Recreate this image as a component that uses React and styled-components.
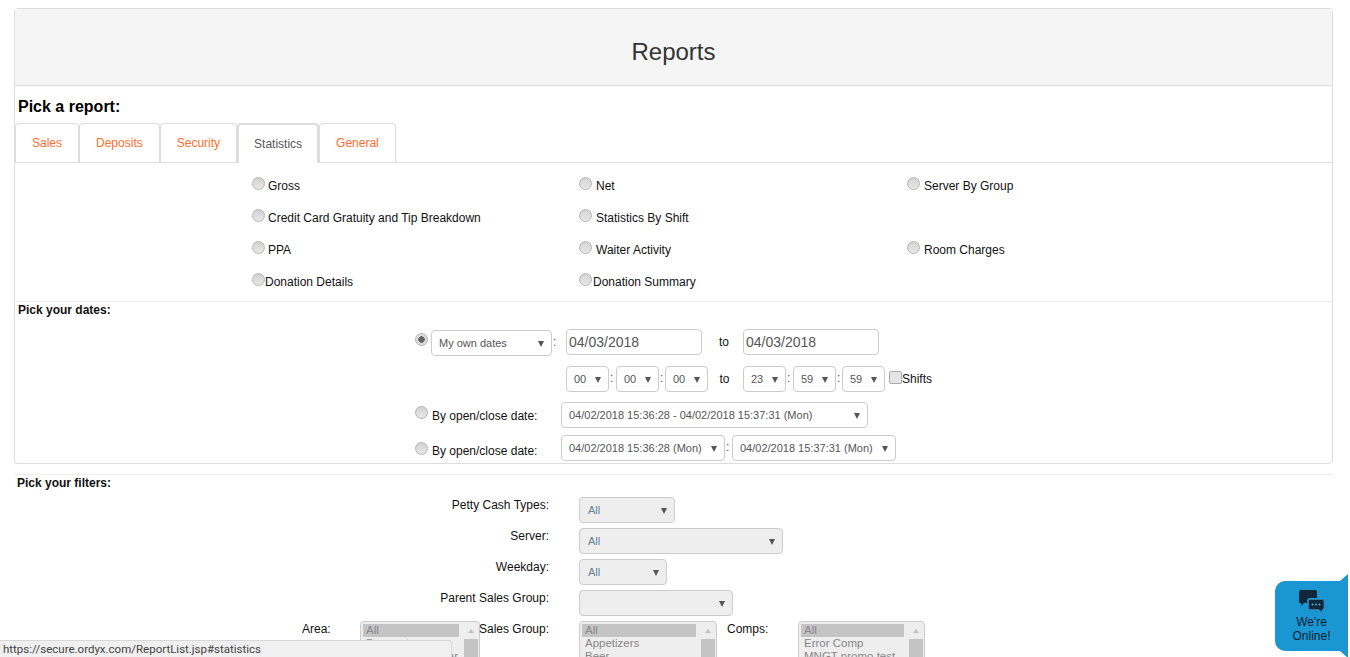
import styled, { createGlobalStyle } from "styled-components";

const GlobalStyle = createGlobalStyle`
html, body {
    margin: 0;
    height: 657px;
    overflow: hidden;
    background: #fff;
    font-family: "Liberation Sans", Arial, sans-serif;
    font-size: 12px;
    color: #111;
}
* { box-sizing: border-box; }
`;

const tabs = ["Sales", "Deposits", "Security", "Statistics", "General"];

const reports = [
    ["Gross", "Net", "Server By Group"],
    ["Credit Card Gratuity and Tip Breakdown", "Statistics By Shift", ""],
    ["PPA", "Waiter Activity", "Room Charges"],
    ["Donation Details", "Donation Summary", ""],
];

function Select({ width, muted, children }) {
    return (
        <SelectBox $width={width} $muted={muted}>
            <span>{children}</span>
            <Caret />
        </SelectBox>
    );
}

function ListBox({ width, items }) {
    return (
        <List $width={width}>
            <ListItems>
                {items.map((item, i) => (
                    <ListItem key={item} $selected={i === 0}>{item}</ListItem>
                ))}
            </ListItems>
            <ScrollTrack>
                <ScrollArrow />
                <ScrollThumb />
            </ScrollTrack>
        </List>
    );
}

export default function App() {
    return (
        <Page>
            <GlobalStyle />
            <Panel>
                <PanelHeading>Reports</PanelHeading>
                <PickTitle>Pick a report:</PickTitle>
                <TabBar>
                    {tabs.map((tab) => (
                        <Tab key={tab} $active={tab === "Statistics"}>{tab}</Tab>
                    ))}
                </TabBar>
                <ReportGrid>
                    {reports.map((row, r) =>
                        row.map((label, c) => (
                            <ReportCell key={r + "-" + c}>
                                {label && <Radio />}
                                {label && (
                                    <ReportLabel $gap={r === 3 ? c : c === 0 ? 3 : 4}>{label}</ReportLabel>
                                )}
                            </ReportCell>
                        ))
                    )}
                </ReportGrid>
                <SectionTitle>Pick your dates:</SectionTitle>
                <DateForm>
                    <DateRow>
                        <Radio $checked $top={4} />
                        <OwnDates>
                            <Select width={121}>My own dates</Select>
                            <Colon>:</Colon>
                        </OwnDates>
                        <DateInput>04/03/2018</DateInput>
                        <ToLabel $wide>to</ToLabel>
                        <DateInput>04/03/2018</DateInput>
                    </DateRow>
                    <TimeRow>
                        <Select width={43}>00</Select>
                        <Colon>:</Colon>
                        <Select width={43}>00</Select>
                        <Colon $narrow>:</Colon>
                        <Select width={43}>00</Select>
                        <ToLabel>to</ToLabel>
                        <Select width={43}>23</Select>
                        <Colon>:</Colon>
                        <Select width={43}>59</Select>
                        <Colon $narrow>:</Colon>
                        <Select width={43}>59</Select>
                        <Checkbox />
                        <span>Shifts</span>
                    </TimeRow>
                    <RangeRow>
                        <Radio $top={4} />
                        <RangeLabel $top={7}>By open/close date:</RangeLabel>
                        <Select width={307}>04/02/2018 15:36:28 - 04/02/2018 15:37:31 (Mon)</Select>
                    </RangeRow>
                    <RangeRow>
                        <Radio $top={7} />
                        <RangeLabel $top={9}>By open/close date:</RangeLabel>
                        <Select width={164}>04/02/2018 15:36:28 (Mon)</Select>
                        <Colon>:</Colon>
                        <Select width={164}>04/02/2018 15:37:31 (Mon)</Select>
                    </RangeRow>
                </DateForm>
            </Panel>
            <FilterDivider />
            <FilterTitle>Pick your filters:</FilterTitle>
            <FilterForm>
                <FilterRow>
                    <FilterLabel>Petty Cash Types:</FilterLabel>
                    <Select width={96} muted>All</Select>
                </FilterRow>
                <FilterRow>
                    <FilterLabel>Server:</FilterLabel>
                    <Select width={204} muted>All</Select>
                </FilterRow>
                <FilterRow>
                    <FilterLabel>Weekday:</FilterLabel>
                    <Select width={88} muted>All</Select>
                </FilterRow>
                <FilterRow>
                    <FilterLabel>Parent Sales Group:</FilterLabel>
                    <Select width={154} muted />
                </FilterRow>
                <ListRow>
                    <AreaLabel>Area:</AreaLabel>
                    <ListBox width={120} items={["All", "Banquet room", "Outdoor Patio Bar"]} />
                    <SalesLabel>Sales Group:</SalesLabel>
                    <ListBox width={138} items={["All", "Appetizers", "Beer"]} />
                    <CompsLabel>Comps:</CompsLabel>
                    <ListBox width={127} items={["All", "Error Comp", "MNGT promo test"]} />
                </ListRow>
            </FilterForm>
            <StatusBar>https://secure.ordyx.com/ReportList.jsp#statistics</StatusBar>
            <ChatWidget>
                <ChatNotch />
                <ChatIcon viewBox="0 0 26 23">
                    <path d="M1.500 0h15A1.500 1.500 0 0 1 18 1.500V8H10.500A2.500 2.500 0 0 0 8 10.500V13H5l-3 3v-3H1.500A1.500 1.500 0 0 1 0 11.500v-10A1.500 1.500 0 0 1 1.500 0Z" />
                    <FrontBubble d="M11 9.500h12.500a1.500 1.500 0 0 1 1.500 1.500v7a1.500 1.500 0 0 1-1.500 1.500H23v3l-3-3h-9A1.500 1.500 0 0 1 9.500 18v-7A1.500 1.500 0 0 1 11 9.500Z" />
                    <Dot cx="13.500" cy="14.500" r="1" />
                    <Dot cx="17" cy="14.500" r="1" />
                    <Dot cx="20.500" cy="14.500" r="1" />
                </ChatIcon>
                <ChatText>We're<br />Online!</ChatText>
            </ChatWidget>
        </Page>
    );
}

const Page = styled.div`
    padding: 8px 17px 0 14px;
    height: 657px;
    overflow: hidden;
`;

const Panel = styled.div`
    height: 456px;
    border: 1px solid #ddd;
    border-radius: 4px;
    overflow: hidden;
`;

const PanelHeading = styled.div`
    height: 77px;
    padding-top: 28px;
    background: #f5f5f5;
    border-bottom: 1px solid #ddd;
    text-align: center;
    font-size: 24px;
    line-height: 30px;
    color: #333;
`;

const PickTitle = styled.div`
    height: 37px;
    padding: 12px 0 0 3px;
    font-size: 16px;
    line-height: 18px;
    font-weight: bold;
    color: #000;
`;

const TabBar = styled.div`
    display: flex;
    height: 40px;
    border-bottom: 1px solid #ddd;
`;

const Tab = styled.div`
    height: ${(p) => (p.$active ? "40px" : "39px")};
    padding: 0 ${(p) => (p.$active ? "15px" : "16px")};
    display: flex;
    align-items: center;
    background: #fff;
    border-style: solid;
    border-color: #ddd;
    border-width: ${(p) => (p.$active ? "2px 2px 0 2px" : "1px 1px 0 1px")};
    border-radius: 4px 4px 0 0;
    color: ${(p) => (p.$active ? "#555" : "#ff6d2e")};
`;

const ReportGrid = styled.div`
    display: grid;
    grid-template-columns: 327px 328px 1fr;
    grid-auto-rows: 32px;
    height: 139px;
    padding: 7px 0 0 237px;
    border-bottom: 1px solid #eee;
`;

const ReportCell = styled.div`
    display: flex;
    align-items: flex-start;
    padding-top: 8px;
`;

const Radio = styled.span`
    flex: none;
    width: 13px;
    height: 13px;
    margin-top: ${(p) => p.$top ?? -1}px;
    border-radius: 50%;
    border: 1px solid #b4b4b4;
    background: ${(p) =>
        p.$checked
            ? "radial-gradient(circle, #666 0 3px, #ddd 3.500px)"
            : "linear-gradient(#d2d2d2, #e8e8e8)"};
`;

const ReportLabel = styled.span`
    margin-left: ${(p) => p.$gap}px;
    line-height: 14px;
    padding-top: 1px;
`;

const SectionTitle = styled.div`
    height: 21px;
    padding: 1px 0 0 3px;
    font-weight: bold;
    line-height: 14px;
    color: #111;
`;

const DateForm = styled.div`
    padding-left: 400px;
`;

const DateRow = styled.div`
    display: flex;
    align-items: flex-start;
    height: 37px;
    margin-top: 6px;
`;

const OwnDates = styled.div`
    display: flex;
    width: 135px;
    margin: 1px 0 0 3px;
`;

const TimeRow = styled.div`
    display: flex;
    align-items: flex-start;
    height: 36px;
    padding-left: 151px;
    line-height: 26px;
`;

const RangeRow = styled.div`
    display: flex;
    align-items: flex-start;
    height: 33px;
`;

const SelectBox = styled.div`
    flex: none;
    position: relative;
    display: flex;
    align-items: center;
    width: ${(p) => p.$width}px;
    height: 26px;
    padding-left: ${(p) => (p.$muted ? "8px" : "7px")};
    font-size: 11px;
    color: ${(p) => (p.$muted ? "#5f7f99" : "#555")};
    background: ${(p) => (p.$muted ? "#eee" : "#fff")};
    border: 1px solid #ccc;
    border-radius: 4px;
    white-space: nowrap;
`;

const Caret = styled.i`
    position: absolute;
    right: 7px;
    top: 10px;
    width: 0;
    height: 0;
    border-left: 3.500px solid transparent;
    border-right: 3.500px solid transparent;
    border-top: 6px solid #555;
`;

const Colon = styled.span`
    width: ${(p) => (p.$narrow ? "6px" : "7px")};
    padding-left: 1px;
    line-height: 24px;
    color: #555;
`;

const DateInput = styled.div`
    flex: none;
    width: 136px;
    height: 26px;
    padding: 0 2px;
    border: 1px solid #ccc;
    border-radius: 4px;
    font-size: 14px;
    line-height: 24px;
    color: #555;
`;

const ToLabel = styled.span`
    width: ${(p) => (p.$wide ? "41px" : "35px")};
    padding: ${(p) => (p.$wide ? "0 0 0 3px" : "0 2px 0 0")};
    text-align: center;
    line-height: 26px;
`;

const Checkbox = styled.span`
    width: 13px;
    height: 13px;
    margin: 5px 0 0 4px;
    border: 1px solid #aaa;
    border-radius: 2px;
    background: #e4e4e4;
`;

const RangeLabel = styled.span`
    width: 133px;
    padding: ${(p) => p.$top}px 0 0 4px;
    line-height: 14px;
`;

const FilterDivider = styled.div`
    height: 1px;
    margin-top: 10px;
    background: #eee;
`;

const FilterTitle = styled.div`
    height: 22px;
    padding: 1px 0 0 3px;
    font-weight: bold;
    line-height: 14px;
    color: #111;
`;

const FilterForm = styled.div`
    display: flex;
    flex-direction: column;
    gap: 5px;
`;

const FilterRow = styled.div`
    display: flex;
    align-items: flex-start;
`;

const FilterLabel = styled.span`
    width: 535px;
    margin-right: 30px;
    text-align: right;
    line-height: 14px;
    padding-top: 1px;
`;

const ListRow = styled.div`
    display: flex;
    align-items: flex-start;
`;

const AreaLabel = styled.span`
    width: 346px;
    padding-left: 288px;
    line-height: 14px;
    padding-top: 1px;
`;

const SalesLabel = styled.span`
    width: 100px;
    text-align: right;
    margin-left: -31px;
    margin-right: 30px;
    line-height: 14px;
    padding-top: 1px;
`;

const CompsLabel = styled.span`
    width: 81px;
    padding-left: 10px;
    line-height: 14px;
    padding-top: 1px;
`;

const List = styled.div`
    flex: none;
    display: flex;
    justify-content: space-between;
    width: ${(p) => p.$width}px;
    height: 70px;
    padding: 2px 1px 0 2px;
    background: #eee;
    border: 1px solid #ccc;
    border-radius: 4px;
`;

const ListItems = styled.div`
    flex: 1;
    margin-right: 5px;
    min-width: 0;
`;

const ListItem = styled.div`
    height: 13px;
    padding-left: 3px;
    font-size: 11.500px;
    line-height: 13px;
    color: #888;
    background: ${(p) => (p.$selected ? "#c4c4c4" : "transparent")};
    white-space: nowrap;
    overflow: hidden;
`;

const ScrollTrack = styled.div`
    flex: none;
    width: 14px;
    display: flex;
    flex-direction: column;
    align-items: center;
`;

const ScrollArrow = styled.i`
    width: 0;
    height: 0;
    margin: 5px 0 6px;
    border-left: 3.500px solid transparent;
    border-right: 3.500px solid transparent;
    border-bottom: 4px solid #c0c0c0;
`;

const ScrollThumb = styled.div`
    width: 14px;
    flex: 1;
    background: #c4c4c4;
`;

const StatusBar = styled.div`
    position: fixed;
    left: 0;
    bottom: 0;
    width: 452px;
    height: 17px;
    padding-left: 3px;
    background: #f0f0f0;
    border: 1px solid #d8d8d8;
    border-width: 1px 1px 0 0;
    border-top-right-radius: 3px;
    font-family: Roboto, sans-serif;
    font-size: 11.500px;
    line-height: 17px;
    color: #444;
`;

const ChatWidget = styled.div`
    position: fixed;
    left: 1275px;
    top: 581px;
    width: 73px;
    height: 70px;
    padding-top: 9px;
    background: #1a96d2;
    border-radius: 10px 0 0 10px;
    display: flex;
    flex-direction: column;
    align-items: center;
    color: #0b2233;
`;

const ChatNotch = styled.i`
    position: absolute;
    right: 0;
    top: -7px;
    width: 8px;
    height: 84px;
    background: #1a96d2;
    clip-path: polygon(0 7px, 100% 0, 100% 100%, 0 77px);
`;

const ChatIcon = styled.svg`
    width: 26px;
    height: 23px;
    fill: #10263a;
`;

const FrontBubble = styled.path`
    stroke: #3f7fa3;
    stroke-width: 0.800;
`;

const Dot = styled.circle`
    fill: #5cb4dc;
`;

const ChatText = styled.div`
    position: relative;
    margin-top: 2px;
    text-align: center;
    font-size: 12px;
    line-height: 14px;
`;
